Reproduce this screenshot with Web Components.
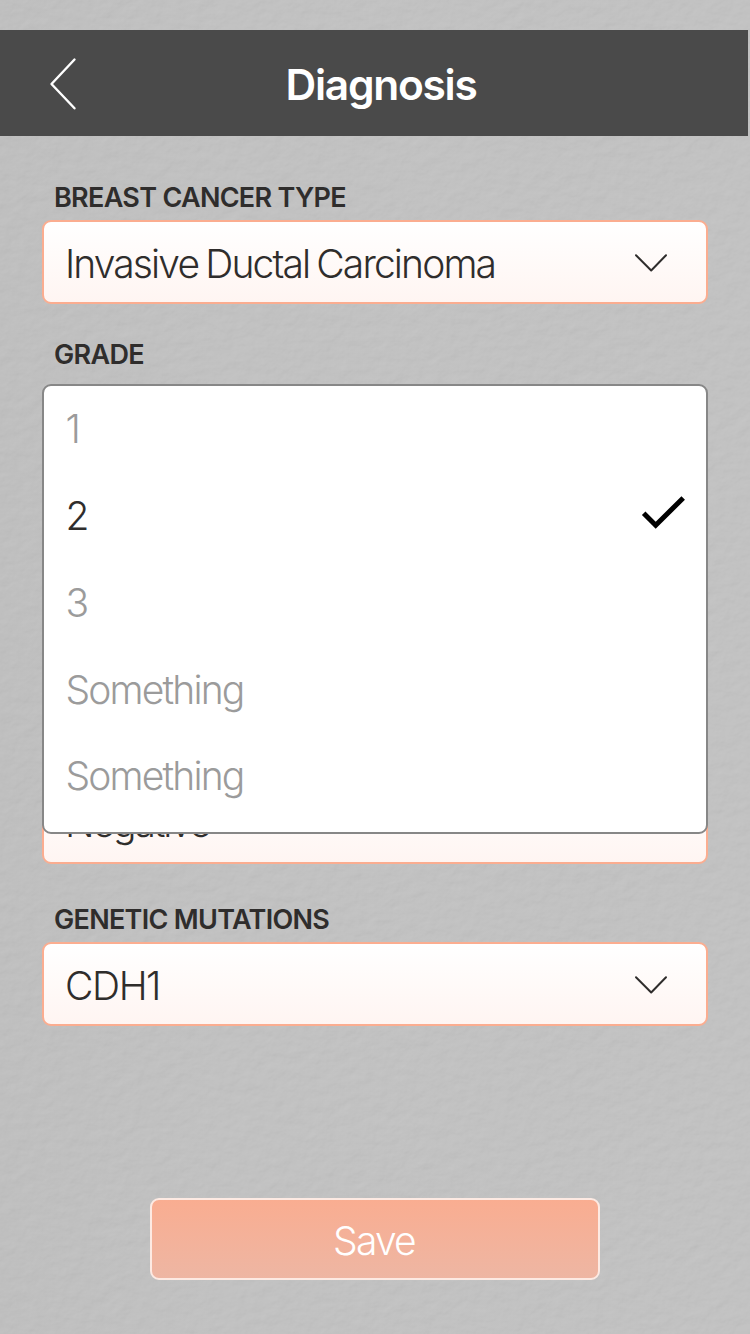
<!DOCTYPE html>
<html lang="en">
<head>
  <meta charset="utf-8">
  <title>Diagnosis</title>
  <style>
    html, body {
      margin: 0;
      padding: 0;
    }

    body {
      font-family: Inter, "Liberation Sans", sans-serif;
      color: #2f2d2c;
      height: 1334px;
      overflow: hidden;
    }

    .grade {
      margin-top: 27px;
    }

    .later {
      --text-top: 0px;
      margin-top: 319px;
    }

    .last {
      margin-top: 32px;
    }
  </style>
</head>
<body>
  <diagnosis-page>
    <title-bar slot="header">Diagnosis</title-bar>
    <select-field label="BREAST CANCER TYPE" spacing="-1.87px">Invasive Ductal Carcinoma</select-field>
    <select-field class="grade" label="GRADE" open>
      <option-menu slot="menu">
        <option-item>1</option-item>
        <option-item selected>2</option-item>
        <option-item>3</option-item>
        <option-item>Something</option-item>
        <option-item>Something</option-item>
      </option-menu>
    </select-field>
    <select-field class="later" spacing="-2.1px">Negative</select-field>
    <select-field class="last" label="GENETIC MUTATIONS" spacing="-1.4px">CDH1</select-field>
    <save-button slot="footer">Save</save-button>
  </diagnosis-page>

  <script>
    class DiagnosisPage extends HTMLElement {
      constructor () {
        super()
        this.shadow = this.attachShadow({ mode: 'open' })
      }

      connectedCallback () {
        this.render()
      }

      render () {
        this.shadow.innerHTML =
          /*html*/`
          <style>
            :host {
              display: flex;
              flex-direction: column;
              position: relative;
              isolation: isolate;
              box-sizing: border-box;
              width: 750px;
              height: 1334px;
              padding-top: 30px;
              background: linear-gradient(90deg, #bebebe, #c1c1c1 30%, #c2c2c2);
            }

            .paper {
              position: absolute;
              inset: 0;
              width: 100%;
              height: 100%;
              z-index: -1;
            }

            main {
              display: flex;
              flex-direction: column;
              padding: 38px 42px 0;
            }

            footer {
              display: flex;
              justify-content: center;
              padding-top: 172px;
            }
          </style>

          <svg class="paper" aria-hidden="true">
            <filter id="grain" x="0" y="0" width="100%" height="100%" color-interpolation-filters="sRGB">
              <feTurbulence type="fractalNoise" baseFrequency="0.07 0.09" numOctaves="4" seed="8"/>
              <feDiffuseLighting surfaceScale="0.7" diffuseConstant="1.08" lighting-color="#c3c3c3">
                <feDistantLight azimuth="235" elevation="68"/>
              </feDiffuseLighting>
            </filter>
            <rect width="100%" height="100%" filter="url(#grain)" opacity="0.28"/>
          </svg>
          <slot name="header"></slot>
          <main><slot></slot></main>
          <footer><slot name="footer"></slot></footer>`
      }
    }

    class TitleBar extends HTMLElement {
      constructor () {
        super()
        this.shadow = this.attachShadow({ mode: 'open' })
      }

      connectedCallback () {
        this.render()
      }

      render () {
        this.shadow.innerHTML =
          /*html*/`
          <style>
            :host {
              display: grid;
              grid-template-columns: 126px 1fr 112px;
              align-items: center;
              width: 748px;
              height: 106px;
              background: #4a4a4a;
              color: #fff;
            }

            svg {
              display: block;
              margin-left: 46px;
              margin-top: 2px;
            }

            h1 {
              margin: 4px 0 0;
              text-align: center;
              font-size: 42.5px;
              font-weight: 600;
              line-height: 52px;
              letter-spacing: -1.28px;
            }
          </style>

          <svg width="34" height="60" viewBox="0 0 34 60" fill="none" stroke="#fff" stroke-width="2.4" stroke-linecap="round" stroke-linejoin="round">
            <path d="M28.5 5.5 5.5 30l23 24.3"/>
          </svg>
          <h1><slot></slot></h1>`
      }
    }

    class SelectField extends HTMLElement {
      constructor () {
        super()
        this.shadow = this.attachShadow({ mode: 'open' })
      }

      connectedCallback () {
        this.render()
      }

      render () {
        const label = this.getAttribute('label')

        this.shadow.innerHTML =
          /*html*/`
          <style>
            :host {
              display: block;
              position: relative;
            }

            label {
              display: block;
              box-sizing: border-box;
              height: 46px;
              padding: 1px 0 0 12px;
              font-size: 27px;
              font-weight: 580;
              line-height: 46px;
              white-space: nowrap;
              letter-spacing: -0.7px;
            }

            .box {
              display: flex;
              align-items: center;
              justify-content: space-between;
              box-sizing: border-box;
              height: 84px;
              padding: var(--text-top, 2px) 38px 0 21px;
              border: 2px solid #fbad90;
              border-radius: 9px;
              background: linear-gradient(#ffffff, #fff5f2);
              font-size: 39px;
              font-weight: 260;
              white-space: nowrap;
              word-spacing: -2px;
              letter-spacing: ${this.getAttribute('spacing') || 'normal'};
            }

            :host([open]) .box {
              visibility: hidden;
            }

            .box svg {
              display: block;
            }

            slot[name="menu"] {
              display: block;
              position: absolute;
              top: 53px;
              left: 0;
              right: 0;
              z-index: 1;
            }
          </style>

          ${label ? `<label>${label}</label>` : ''}
          <div class="box">
            <span><slot></slot></span>
            <svg width="34" height="20" viewBox="0 0 34 20" fill="none" stroke="#2f2d2c" stroke-width="2" stroke-linecap="round" stroke-linejoin="round">
              <path d="M2 2.3l15.2 15.2L32 2.3"/>
            </svg>
          </div>
          <slot name="menu"></slot>`
      }
    }

    class OptionMenu extends HTMLElement {
      constructor () {
        super()
        this.shadow = this.attachShadow({ mode: 'open' })
      }

      connectedCallback () {
        this.render()
      }

      render () {
        this.shadow.innerHTML =
          /*html*/`
          <style>
            :host {
              display: flex;
              flex-direction: column;
              box-sizing: border-box;
              height: 450px;
              border: 2px solid #878787;
              border-radius: 9px;
              background: #fff;
            }
          </style>

          <slot></slot>`
      }
    }

    class OptionItem extends HTMLElement {
      constructor () {
        super()
        this.shadow = this.attachShadow({ mode: 'open' })
      }

      connectedCallback () {
        this.render()
      }

      render () {
        const check =
          /*html*/`
          <svg width="46" height="36" viewBox="0 0 46 36" fill="none" stroke="#000" stroke-width="5">
            <path d="M3.7 19.3l12 11.9L43.2 4"/>
          </svg>`

        this.shadow.innerHTML =
          /*html*/`
          <style>
            :host {
              display: flex;
              align-items: center;
              justify-content: space-between;
              box-sizing: border-box;
              height: 86.8px;
              padding: 0 20px 0.5px 21.5px;
              color: #9b9b9b;
              font-size: 39px;
              font-weight: 260;
              line-height: 48px;
              letter-spacing: -1.85px;
            }

            :host([selected]) {
              color: #2f2d2c;
            }

            svg {
              display: block;
              margin-bottom: 7px;
            }
          </style>

          <span><slot></slot></span>
          ${this.hasAttribute('selected') ? check : ''}`
      }
    }

    class SaveButton extends HTMLElement {
      constructor () {
        super()
        this.shadow = this.attachShadow({ mode: 'open' })
      }

      connectedCallback () {
        this.render()
      }

      render () {
        this.shadow.innerHTML =
          /*html*/`
          <style>
            button {
              display: block;
              width: 450px;
              height: 82px;
              padding: 2px 2px 0 0;
              border: 2px solid #fdeae3;
              border-radius: 9px;
              background: linear-gradient(#f9ad91, #eeb6a3);
              color: #fff;
              font-family: inherit;
              font-size: 39px;
              font-weight: 260;
              letter-spacing: -1.8px;
            }
          </style>

          <button type="button"><slot></slot></button>`
      }
    }

    customElements.define('diagnosis-page', DiagnosisPage)
    customElements.define('title-bar', TitleBar)
    customElements.define('select-field', SelectField)
    customElements.define('option-menu', OptionMenu)
    customElements.define('option-item', OptionItem)
    customElements.define('save-button', SaveButton)
  </script>
</body>
</html>
